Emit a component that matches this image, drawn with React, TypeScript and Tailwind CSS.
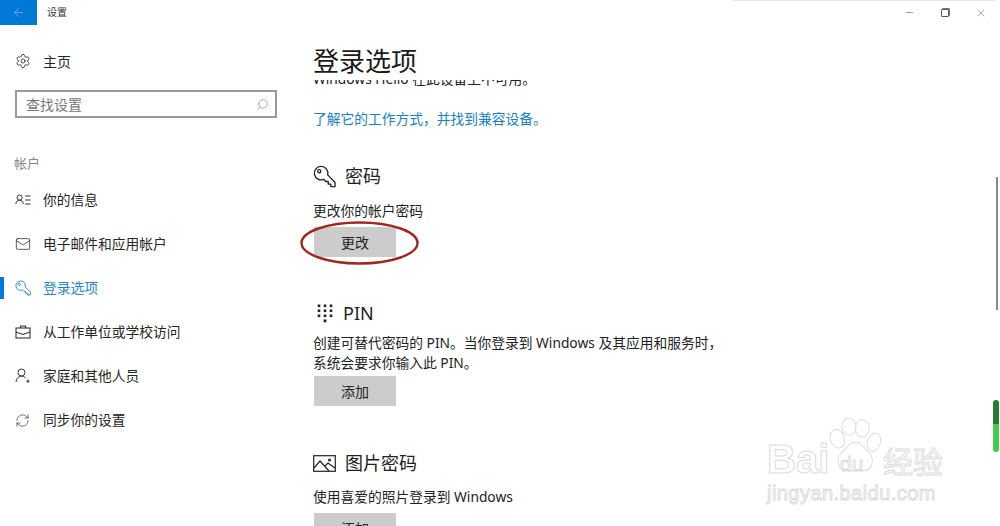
import { ArrowLeft, Search, Settings, Mail, RefreshCw, X, Minus } from 'lucide-react';
import type { ReactNode } from 'react';

const fontCls = "font-['Noto_Sans','Noto_Sans_CJK_SC',sans-serif]";

function KeyIcon({ size = 20, color = 'currentColor' }: { size?: number; color?: string }) {
    return (
        <svg width={size} height={size} viewBox="0 0 24 24" fill="none" stroke={color} strokeWidth="1.4">
            <path d="M8.5 1.5a7 7 0 0 1 6.8 8.8l7.7 7.9v4.3h-4.4v-2.6h-2.7v-2.7h-2.5l-2.2-2.3A7 7 0 1 1 8.5 1.5z" strokeLinejoin="round" />
            <circle cx="6.5" cy="6.5" r="1.6" />
        </svg>
    );
}

function PersonListIcon() {
    return (
        <svg width="16" height="16" viewBox="0 0 16 16" fill="none" stroke="#333" strokeWidth="1">
            <circle cx="4.6" cy="5.6" r="2.6" />
            <path d="M.8 12c.4-2.6 1.8-3.8 3.8-3.8s3.4 1.2 3.8 3.8" />
            <path d="M10 4h5.5M10 8h5.5M10 12h5.5" />
        </svg>
    );
}

function BriefcaseIcon() {
    return (
        <svg width="16" height="16" viewBox="0 0 16 16" fill="none" stroke="#333" strokeWidth="1.1">
            <rect x="1" y="4" width="14" height="10" />
            <path d="M5.5 4V2h5v2M1 8l7 2.5L15 8" />
        </svg>
    );
}

function PersonPlusIcon() {
    return (
        <svg width="16" height="16" viewBox="0 0 16 16" fill="none" stroke="#333" strokeWidth="1">
            <circle cx="6.5" cy="4.5" r="3.5" />
            <path d="M1 14c.3-3.6 2.4-5.8 5.5-5.8 1.8 0 3.2.7 4.2 2M13 11.5v3.5M11.3 13.2h3.4" />
        </svg>
    );
}

function PinIcon() {
    const rows = [3, 8, 13];
    return (
        <svg width="16" height="20" viewBox="0 0 16 20" fill="#222">
            {rows.map((y) => [2, 8, 14].map((x) => <rect key={`${x}-${y}`} x={x - 1.3} y={y - 1.5} width="2.6" height="2.6" />))}
            <rect x="6.6" y="16.5" width="2.8" height="2.8" />
        </svg>
    );
}

function PictureIcon() {
    return (
        <svg width="23" height="17" viewBox="0 0 23 17" fill="none" stroke="#222" strokeWidth="1.2">
            <rect x=".7" y=".7" width="21.6" height="15.6" />
            <path d="M1 13l6-7 9 10M12 11l3-3 7 5" />
            <circle cx="16.5" cy="5" r="1" />
        </svg>
    );
}

function NavItem({ icon, label, active }: { icon: ReactNode; label: string; active?: boolean }) {
    return (
        <div className={`relative flex items-center h-[44px] pl-[15px] text-[13.75px] ${active ? 'text-[#2a85c8]' : 'text-[#262626]'}`}>
            {active && <div className="absolute left-0 top-[11px] w-[4px] h-[22px] bg-[#0078d7]" />}
            <div className="w-[28px] flex items-center">{icon}</div>
            <span>{label}</span>
        </div>
    );
}

function Heading({ icon, text, tight }: { icon: ReactNode; text: string; tight?: boolean }) {
    return (
        <div className={`flex items-center h-[28px] text-[18px] text-[#222] ${tight ? 'gap-[6px]' : 'gap-[8px]'}`}>
            <div className="w-[24px] flex items-center">{icon}</div>
            <span>{text}</span>
        </div>
    );
}

function GrayButton({ label }: { label: string }) {
    return <div className="ml-[1px] w-[82px] h-[30px] bg-[#cccccc] flex items-center justify-center text-[14px] text-[#222]">{label}</div>;
}

function Watermark() {
    return (
        <div className="absolute left-[767px] top-[418px] w-[195px] h-[90px] select-none font-['Liberation_Sans',sans-serif] text-transparent [-webkit-text-stroke:1px_#dcdcdc]">
            <svg className="absolute left-[61px] top-0" width="56" height="57" viewBox="0 0 72 66" preserveAspectRatio="none" fill="none" stroke="#dcdcdc" strokeWidth="1.2">
                <ellipse cx="27" cy="10" rx="9" ry="10" />
                <ellipse cx="44" cy="12" rx="9" ry="10" />
                <ellipse cx="12" cy="24" rx="9" ry="11" transform="rotate(-25 12 24)" />
                <ellipse cx="59" cy="28" rx="8" ry="11" transform="rotate(25 59 28)" />
                <path d="M36 28c8 0 11 8 17 13 7 6 5 20-8 20H25c-13 0-15-14-8-20 6-5 10-13 19-13z" />
            </svg>
            <div className="absolute left-0 top-[19px] text-[40px] leading-[44px] font-bold">Bai</div>
            <div className="absolute left-[73px] top-[34px] text-[21px] leading-[24px]">du</div>
            <div className="absolute left-[116px] top-[22px] text-[30px] leading-[40px] font-['Noto_Sans_CJK_SC',sans-serif]">经验</div>
            <div className="absolute left-0 top-[63px] text-[20px] leading-[24px] tracking-[.45px]">jingyan.baidu.com</div>
        </div>
    );
}

export default function App() {
    return (
        <div className={`relative w-[1000px] h-[526px] overflow-hidden bg-white flex flex-col ${fontCls}`}>
            {/* title bar */}
            <div className="flex items-center h-[25px] shrink-0">
                <div className="w-[37px] h-full bg-[#0078d7] flex items-center justify-center">
                    <ArrowLeft size={13} color="#8cc6f2" strokeWidth={1.2} />
                </div>
                <span className="ml-[10px] text-[10px] text-[#333]">设置</span>
                <div className="ml-auto flex items-center text-[#555]">
                    <div className="w-[36px] flex justify-center"><Minus size={11} strokeWidth={1.2} /></div>
                    <div className="w-[36px] flex justify-center">
                        <div className="relative w-[8px] h-[8px] border border-[#555] rounded-[1px] shadow-[1px_-1px_0_#777]" />
                    </div>
                    <div className="w-[36px] mr-[1px] flex justify-center"><X size={12} strokeWidth={1} /></div>
                </div>
            </div>

            <div className="flex flex-1 min-h-0">
                {/* sidebar */}
                <div className="w-[297px] shrink-0">
                    <div className="flex items-center h-[30px] mt-[21px] pl-[15px] text-[14px] text-[#262626]">
                        <div className="w-[28px]"><Settings size={16} color="#333" strokeWidth={1.3} /></div>
                        <span>主页</span>
                    </div>
                    <div className="mx-[15px] mt-[14px] w-[262px] h-[28px] border-2 border-[#999] flex items-center justify-between pl-[9px] pr-[6px] text-[14px] text-[#777]">
                        <span>查找设置</span>
                        <Search size={13} color="#777" strokeWidth={1.1} className="-scale-x-100" />
                    </div>
                    <div className="pl-[14px] mt-[35px] h-[22px] flex items-center text-[13px] text-[#888]">帐户</div>
                    <div className="mt-[3px]">
                        <NavItem icon={<PersonListIcon />} label="你的信息" />
                        <NavItem icon={<Mail size={16} color="#333" strokeWidth={1.2} />} label="电子邮件和应用帐户" />
                        <NavItem icon={<KeyIcon size={16} color="#2a85c8" />} label="登录选项" active />
                        <NavItem icon={<BriefcaseIcon />} label="从工作单位或学校访问" />
                        <NavItem icon={<PersonPlusIcon />} label="家庭和其他人员" />
                        <NavItem icon={<RefreshCw size={15} color="#333" strokeWidth={1.1} />} label="同步你的设置" />
                    </div>
                </div>

                {/* content */}
                <div className="flex-1 min-w-0 pl-[16px] flex flex-col">
                    <div className="h-[37px] mt-[18px] shrink-0 text-[26px] leading-[37px] text-[#1a1a1a]">登录选项</div>
                    <div className="flex-1 min-h-0 overflow-hidden w-[420px]">
                        <div className="-mt-[11px] text-[13.75px] leading-[20px] text-[#222]">Windows Hello 在此设备上不可用。</div>
                        <div className="mt-[20px] text-[13.75px] leading-[20px] text-[#1a80c4]">了解它的工作方式，并找到兼容设备。</div>

                        <div className="mt-[33px]"><Heading icon={<KeyIcon size={23} color="#222" />} text="密码" /></div>
                        <div className="mt-[11px] text-[13.75px] leading-[20px] text-[#222]">更改你的帐户密码</div>
                        <div className="mt-[6px]"><GrayButton label="更改" /></div>

                        <div className="mt-[42px]"><Heading tight icon={<div className="ml-[4px]"><PinIcon /></div>} text="PIN" /></div>
                        <div className="mt-[6px] text-[13.75px] leading-[20px] text-[#222]">
                            创建可替代密码的 PIN。当你登录到 Windows 及其应用和服务时，
                            <br />
                            系统会要求你输入此 PIN。
                        </div>
                        <div className="mt-[3px]"><GrayButton label="添加" /></div>

                        <div className="mt-[43px]"><Heading icon={<PictureIcon />} text="图片密码" /></div>
                        <div className="mt-[10px] text-[13.75px] leading-[20px] text-[#222]">使用喜爱的照片登录到 Windows</div>
                        <div className="mt-[6px]"><GrayButton label="添加" /></div>
                    </div>
                </div>
            </div>

            {/* red marker ellipse drawn over the button */}
            <svg className="absolute left-[299px] top-[220px]" width="122" height="47" viewBox="0 0 122 47" fill="none">
                <ellipse cx="60.5" cy="23" rx="58" ry="20.5" stroke="#a0281f" strokeWidth="2.4" />
            </svg>

            {/* top strip, scrollbar, side widget */}
            <div className="absolute left-[733px] top-0 w-[262px] h-[1px] bg-[#e8e8e8]" />
            <div className="absolute left-[996px] top-[177px] w-[2px] h-[133px] bg-[#8a8a8a]" />
            <div className="absolute left-[993px] top-[400px] w-[6px] h-[52px] rounded-[3px] overflow-hidden flex flex-col">
                <div className="h-[24px] bg-[#2a7a34]" />
                <div className="flex-1 bg-[#45c950]" />
            </div>

            <Watermark />
        </div>
    );
}
